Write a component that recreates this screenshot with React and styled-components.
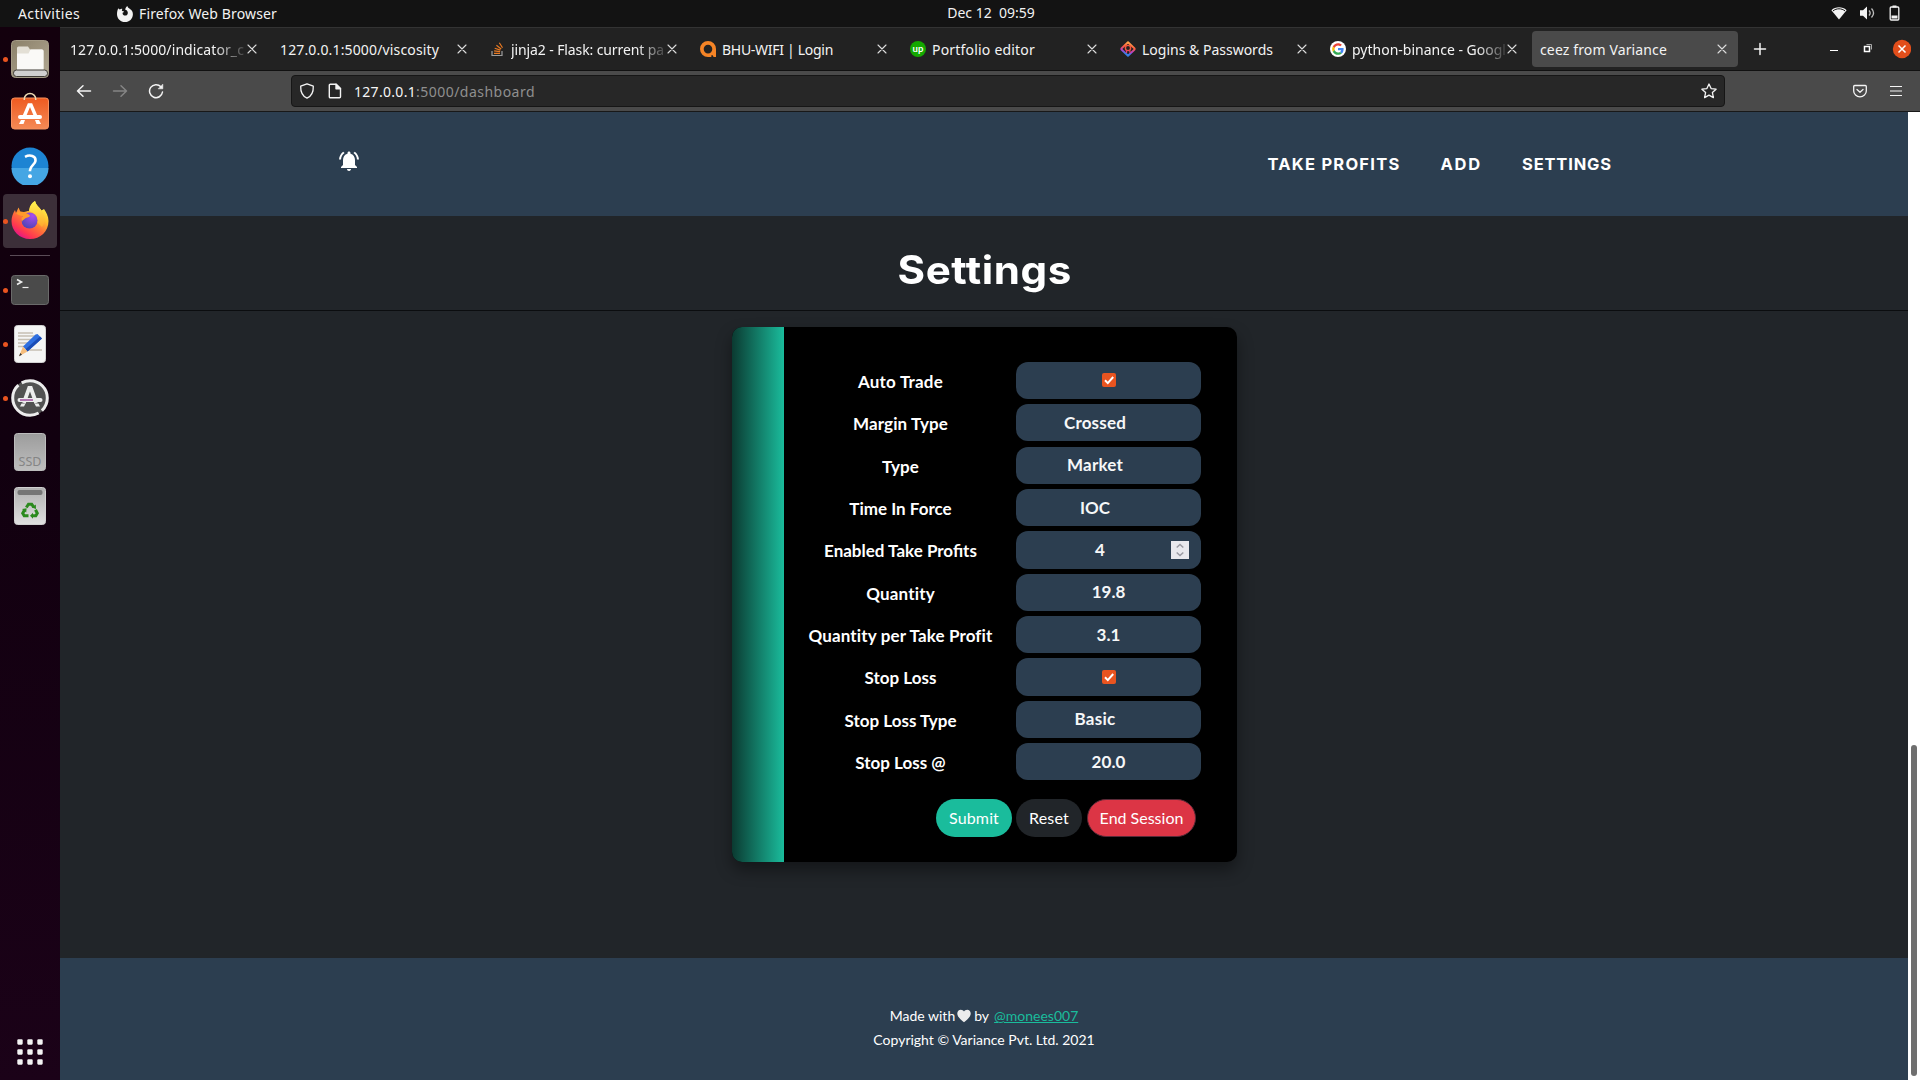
import React, { useLayoutEffect, useRef, useState } from "react";
import styled, { createGlobalStyle, css } from "styled-components";
import { MdNotificationsActive } from "react-icons/md";

const ui = `"Noto Sans", "Open Sans", sans-serif`;
const lato = `Lato, "Liberation Sans", sans-serif`;
const heading = `Inter, "Open Sans", sans-serif`;

const Global = createGlobalStyle`
  * { box-sizing: border-box; }
  html, body { margin: 0; height: 100%; overflow: hidden; background: #212529; }
  svg { display: block; flex: none; }
`;

/* Text tracked so that its line has the given width */
const Line = styled.span`
  display: inline-block;
  white-space: pre;
`;
function Tracked({ width, children }) {
  const ref = useRef(null);
  const [spacing, setSpacing] = useState(0);
  useLayoutEffect(() => {
    const natural = ref.current.getBoundingClientRect().width;
    const step = (width - natural) / Math.max(1, children.length);
    // tiny corrections are dropped so that ligatures stay on
    setSpacing(Math.abs(step) < 0.09 ? 0 : step);
  }, [width, children]);
  return <Line ref={ref} style={{ letterSpacing: spacing }}>{children}</Line>;
}

const Screen = styled.div`
  width: 1920px;
  height: 1080px;
  display: flex;
  flex-direction: column;
  overflow: hidden;
  background: #12000e;
`;

/* ---------- desktop bar ---------- */
const TopBar = styled.header`
  height: 27px;
  flex: none;
  display: grid;
  grid-template-columns: 1fr auto 1fr;
  align-items: center;
  background: #131313;
  color: #f2f2f2;
  font: 400 14px/26px ${ui};
`;
const TopLeft = styled.div`
  display: flex;
  align-items: center;
  padding-left: 18px;
`;
const AppMenu = styled.div`
  display: flex;
  align-items: center;
  gap: 6px;
  margin-left: 37px;
`;
const Clock = styled.div`
  margin-left: 62px;
  padding-bottom: 1px;
`;
const Tray = styled.div`
  display: flex;
  justify-content: flex-end;
  align-items: center;
  gap: 12px;
  padding: 0 19px 2px 0;
`;

const Body = styled.div`
  flex: 1;
  min-height: 0;
  display: flex;
`;

/* ---------- dock ---------- */
const Dock = styled.nav`
  width: 60px;
  flex: none;
  display: flex;
  flex-direction: column;
  align-items: center;
  padding: 5px 0 11px;
  background: linear-gradient(180deg, #13000d 0%, #11000f 40%, #1b0218 100%);
`;
const DockItem = styled.div`
  position: relative;
  width: 54px;
  height: 54px;
  flex: none;
  display: flex;
  align-items: center;
  justify-content: center;
  padding-bottom: ${(p) => p.$lift || 0}px;
  border-radius: 4px;
  background: ${(p) => (p.$active ? "#3c2f39" : "transparent")};
  ${(p) =>
    p.$running &&
    css`
      &::before {
        content: "";
        position: absolute;
        left: 0;
        top: 25px;
        width: 5px;
        height: 5px;
        border-radius: 50%;
        background: #e95420;
      }
    `}
`;
const DockRule = styled.div`
  width: 40px;
  height: 1px;
  margin: 7px 0;
  background: #5a4c57;
`;
const AppsButton = styled.div`
  margin-top: auto;
  width: 54px;
  height: 34px;
  display: flex;
  align-items: center;
  justify-content: center;
`;

/* ---------- browser ---------- */
const Browser = styled.div`
  flex: 1;
  min-width: 0;
  display: flex;
  flex-direction: column;
`;
const TabStrip = styled.div`
  height: 44px;
  flex: none;
  display: flex;
  align-items: center;
  padding: 0 9px 0 2px;
  background: #222222;
  border-top: 1px solid #333333;
  border-bottom: 1px solid #111111;
  font: 400 14px/20px ${ui};
  color: #f3f3f3;
`;
const Tab = styled.div`
  width: 206px;
  height: 36px;
  margin-right: 4px;
  padding: 0 9px 0 8px;
  display: flex;
  align-items: center;
  gap: 6px;
  border-radius: 4px;
  background: ${(p) => (p.$active ? "#4a4a4a" : "transparent")};
`;
const TabTitle = styled.div`
  flex: 1;
  min-width: 0;
  overflow: hidden;
  margin-right: -6px;
  padding-top: 1px;
  white-space: nowrap;
  ${(p) => p.$fade && css`mask-image: linear-gradient(90deg, #000 82%, transparent 103%);`}
`;
const NewTab = styled.div`
  padding-left: 11px;
`;
const WindowControls = styled.div`
  margin-left: auto;
  display: flex;
  align-items: center;
`;
const Toolbar = styled.div`
  height: 41px;
  flex: none;
  display: flex;
  align-items: center;
  padding: 0 18px 0 16px;
  background: #4a4a4a;
  border-bottom: 1px solid #181818;
`;
const NavButtons = styled.div`
  display: flex;
  gap: 20px;
  width: 215px;
`;
const UrlBar = styled.div`
  width: 1434px;
  height: 32px;
  display: flex;
  align-items: center;
  padding: 0 7px 0 7px;
  background: #272727;
  border: 1px solid #161616;
  border-radius: 4px;
  color: #8f8f8f;
  font: 400 14px/30px ${ui};
`;
const UrlText = styled.div`
  flex: 1;
  padding: 2px 0 0 11px;
  b { font-weight: 400; color: #f6f6f6; }
`;
const PageIcon = styled.div`
  margin-left: 12px;
`;
const ToolbarEnd = styled.div`
  margin-left: auto;
  display: flex;
  align-items: center;
  gap: 23px;
`;

/* ---------- page ---------- */
const Viewport = styled.div`
  flex: 1;
  min-height: 0;
  display: flex;
`;
const Page = styled.div`
  width: 1848px;
  display: flex;
  flex-direction: column;
  background: #212529;
  color: #fff;
  font-family: ${lato};
`;
const ScrollTrack = styled.div`
  flex: 1;
  display: flex;
  align-items: flex-end;
  justify-content: center;
  padding-bottom: 4px;
  background: #fff;
`;
const ScrollThumb = styled.div`
  width: 6px;
  height: 331px;
  border-radius: 3px;
  background: #6f6f6f;
`;
const SiteHeader = styled.div`
  height: 104px;
  flex: none;
  display: flex;
  justify-content: space-between;
  align-items: center;
  padding: 0 296px 0 277px;
  background: #2c3e50;
  font: 700 16.5px/24px ${heading};
`;
const Bell = styled.div`
  margin-top: -6px;
`;
const SiteNav = styled.div`
  display: flex;
  gap: 40px;
`;
const TitleBand = styled.div`
  height: 95px;
  flex: none;
  display: flex;
  justify-content: center;
  align-items: center;
  padding-top: 13px;
  border-bottom: 1px solid #0b0d0f;
`;
const Title = styled.h1`
  margin: 0 0 0 2px;
  font: 700 39px/48px ${heading};
  transform: scaleX(1.08);
`;
const CardArea = styled.div`
  flex: 1;
  display: flex;
  justify-content: center;
  align-items: flex-start;
  padding-top: 16px;
`;
const Card = styled.div`
  width: 505px;
  height: 535px;
  display: flex;
  overflow: hidden;
  border-radius: 10px;
  background: #000;
  box-shadow: 0 8px 16px rgba(0, 0, 0, 0.4);
`;
const Accent = styled.div`
  width: 52px;
  background: linear-gradient(90deg, #0b3a31, #1abc9c);
`;
const Form = styled.div`
  width: 417px;
  padding-top: 34.8px;
`;
const Row = styled.div`
  height: 42.38px;
  display: grid;
  grid-template-columns: 232px 185px;
  align-items: start;
  font: 700 17px/37px ${lato};
  text-align: center;
`;
const Label = styled.label`
  padding: 1px 0 0 2px;
`;
const Field = styled.div`
  height: 37.3px;
  display: grid;
  grid-template-columns: 1fr auto;
  align-items: center;
  border-radius: 12px;
  background: #2c3e50;
  padding-left: ${(p) => (p.$kind === "number" ? 14 : 1)}px;
  padding-right: ${(p) => (p.$kind === "select" ? 27 : p.$kind === "number" ? 12 : 0)}px;
  color: #f6f7f8;
`;
const Value = styled.div`
  line-height: 36px;
`;
const Check = styled.div`
  display: flex;
  justify-content: center;
  padding: 0 0 1px 1px;
`;
const Spinner = styled.div`
  width: 18px;
  height: 18px;
  background: #e9e9ed;
`;
const Actions = styled.div`
  display: flex;
  align-items: center;
  justify-content: flex-end;
  padding: 13.4px 5px 0 0;
`;
const Button = styled.button`
  width: ${(p) => p.$w}px;
  height: 38px;
  margin-left: ${(p) => p.$gap || 0}px;
  padding: 0 0 0 1px;
  border: ${(p) => p.$edge ? `1px solid ${p.$edge}` : "0"};
  border-radius: 19px;
  background: ${(p) => p.$bg};
  color: #fff;
  font: 400 16px/36px ${lato};
`;
const Footer = styled.footer`
  height: 122px;
  flex: none;
  padding-top: 46px;
  background: #2c3e50;
  font: 400 14px/24px ${lato};
  text-align: center;
`;
const FooterLine = styled.div`
  display: flex;
  align-items: center;
  justify-content: center;
  svg { margin: 0 3px 0 2px; }
`;
const Author = styled.a`
  margin-left: 5px;
  color: #1abc9c;
  span { text-decoration: underline; }
`;

/* ---------- drawings ---------- */
const Stroke = ({ size = 16, w = 1.4, color = "#f4f4f4", children, box = 16 }) => (
  <svg width={size} height={size} viewBox={`0 0 ${box} ${box}`} fill="none" stroke={color} strokeWidth={w} strokeLinecap="round" strokeLinejoin="round">
    {children}
  </svg>
);
const Cross = () => (
  <Stroke size={14} box={14} w={1.1} color="#dddddd"><path d="M3 3l8 8M11 3l-8 8" /></Stroke>
);
const Arrow = ({ color, flip }) => (
  <Stroke color={color} w={1.5}>
    <path d={flip ? "M1.500 8h13M9 2.800L14.500 8 9 13.200" : "M14.500 8h-13M7 2.800L1.500 8 7 13.200"} />
  </Stroke>
);
const FirefoxMono = () => (
  <svg width="16" height="16" viewBox="0 0 16 16">
    <path fill="#f2f2f2" d="M1.4 2.3C1.7 3 2.2 3.3 2.8 3.5 3.7 2.8 4.6 2.7 5.4 2.9 5 3.4 4.8 4 4.9 4.7c.6.5 1.4.6 2.2.8-.1.6-.9.9-1.5 1.2-.3 1.6 1 2.9 2.5 2.9 1.800 0 2.900-1.500 2.700-3.200C10.600 5 9.500 4 8.200 3.800 8.300 2.200 9 .9 10.400 0c.3 1.300 1.300 2.100 2.600 2.900C14.900 4.200 16 6 15.900 8.400 15.700 12.700 12.400 16 8 16S0 12.600 0 8.200C0 6 .4 3.800 1.400 2.300z" />
  </svg>
);
const Wifi = () => (
  <svg width="16" height="16" viewBox="0 0 16 16">
    <path d="M8 14.500L.4 5.200C4.600 1.400 11.400 1.400 15.600 5.200z" fill="#f2f2f2" />
    <path d="M2 5.900c3.600-2.800 8.400-2.800 12 0" fill="none" stroke="#131313" strokeWidth="1" />
  </svg>
);
const Volume = () => (
  <svg width="17" height="16" viewBox="0 0 17 16">
    <path d="M1 5.200h3L8 1.500v13L4 10.800H1z" fill="#f2f2f2" />
    <path d="M10 5.500c1.400 1.500 1.400 3.500 0 5M12.500 3.500c2.500 2.700 2.500 6.300 0 9" fill="none" stroke="#bdbdbd" strokeWidth="1.300" />
  </svg>
);
const Battery = () => (
  <svg width="13" height="16" viewBox="0 0 12 16">
    <path d="M4 .5h4v2H4z" fill="#f2f2f2" />
    <rect x="1.700" y="2" width="8.600" height="13" rx="1" fill="none" stroke="#f2f2f2" strokeWidth="1.300" />
    <rect x="3" y="10.500" width="6" height="3" fill="#f2f2f2" />
  </svg>
);

const StackIcon = () => (
  <svg width="15" height="16" viewBox="0 0 15 16" fill="none">
    <path d="M2 10v4.500h10V10" stroke="#9d9d9d" strokeWidth="1.200" />
    <path d="M4 12.300h6M4.100 9.900l6 .7M4.700 7.200l5.700 1.900M6.400 4.300l4.800 3.600M9.300 1.800l3.200 5" stroke="#e87922" strokeWidth="1.200" />
  </svg>
);
const OrangeQ = () => (
  <svg width="16" height="16" viewBox="0 0 16 16">
    <path d="M8 0a8 8 0 100 16h8V8a8 8 0 00-8-8zm0 3.800a4.300 4.300 0 110 8.600 4.300 4.300 0 010-8.600z" fill="#f58426" fillRule="evenodd" />
    <path d="M11 14.700l1.400-.8 1.200 2.100h-2z" fill="#222" />
  </svg>
);
const Upwork = () => (
  <svg width="16" height="16" viewBox="0 0 16 16">
    <circle cx="8" cy="8" r="8" fill="#14a800" />
    <text x="8" y="10.600" textAnchor="middle" fontFamily="Lato, sans-serif" fontWeight="700" fontSize="9.500" fill="#fff">up</text>
  </svg>
);
const Lockwise = () => (
  <svg width="16" height="16" viewBox="0 0 16 16" fill="none">
    <defs>
      <linearGradient id="lw" gradientUnits="userSpaceOnUse" x1="10" y1="0" x2="6" y2="16">
        <stop offset="0" stopColor="#ffbd4f" /><stop offset=".4" stopColor="#ff5a3c" />
        <stop offset=".65" stopColor="#b040d0" /><stop offset=".8" stopColor="#3a7ee6" />
      </linearGradient>
    </defs>
    <path d="M8 1.200L14.300 7.200a1.200 1.200 0 010 1.600L8 14.800 1.700 8.800a1.200 1.200 0 010-1.600z" stroke="url(#lw)" strokeWidth="1.900" strokeLinejoin="round" />
    <circle cx="8" cy="7" r="2.600" stroke="#f3553f" strokeWidth="1.400" />
    <path d="M6.500 9v3M9.500 9l.8 3" stroke="#e8386f" strokeWidth="1.300" />
  </svg>
);
const Google = () => (
  <svg width="16" height="16" viewBox="0 0 48 48">
    <circle cx="24" cy="24" r="24" fill="#fff" />
    <g transform="translate(6.500 6.500) scale(.73)">
      <path fill="#EA4335" d="M24 9.500c3.540 0 6.710 1.220 9.210 3.600l6.850-6.850C35.900 2.380 30.470 0 24 0 14.620 0 6.510 5.380 2.560 13.220l7.980 6.190C12.430 13.720 17.740 9.500 24 9.500z" />
      <path fill="#4285F4" d="M46.980 24.550c0-1.570-.15-3.090-.38-4.550H24v9.020h12.940c-.58 2.960-2.260 5.480-4.780 7.180l7.730 6c4.510-4.180 7.090-10.360 7.090-17.650z" />
      <path fill="#FBBC05" d="M10.530 28.590c-.48-1.450-.76-2.990-.76-4.590s.27-3.140.76-4.590l-7.980-6.190C.92 16.460 0 20.120 0 24c0 3.880.92 7.540 2.560 10.780l7.970-6.190z" />
      <path fill="#34A853" d="M24 48c6.480 0 11.930-2.130 15.890-5.810l-7.730-6c-2.150 1.450-4.920 2.300-8.160 2.300-6.260 0-11.570-4.220-13.470-9.910l-7.980 6.190C6.510 42.620 14.620 48 24 48z" />
    </g>
  </svg>
);

const FilesIcon = () => (
  <svg width="38" height="38" viewBox="0 0 38 38">
    <defs><linearGradient id="fi" x1="0" y1="0" x2="1" y2="1"><stop offset="0" stopColor="#8a8069" /><stop offset="1" stopColor="#b3a993" /></linearGradient></defs>
    <rect x=".5" y=".5" width="37" height="37" rx="4" fill="url(#fi)" stroke="#a49b86" />
    <path d="M6 8a1.500 1.500 0 011.500-1.500H17l2 3H31A1.500 1.500 0 0132.500 11v19H6z" fill="#e3dfd5" />
    <path d="M6 13.500h11.500l2-4H31a1.500 1.500 0 011.500 1.500v19H6z" fill="#faf9f7" />
    <rect x="2.500" y="30" width="34" height="6.500" rx="3" fill="#d0cfcf" stroke="#3f3b35" />
  </svg>
);
const SoftwareIcon = () => (
  <svg width="38" height="38" viewBox="0 0 38 38">
    <defs><linearGradient id="so" x1="0" y1="0" x2="0" y2="1"><stop offset="0" stopColor="#ee5a20" /><stop offset="1" stopColor="#f58a56" /></linearGradient></defs>
    <rect x=".5" y="6" width="37" height="31" rx="3" fill="url(#so)" stroke="#f7915f" />
    <path d="M13.300 8V6.800a5.700 5.200 0 0111.400 0V8" fill="none" stroke="#ecd9b2" strokeWidth="1.500" />
    <path d="M12.500 26L18 13h2L25.500 26" fill="none" stroke="#fff" strokeWidth="3.400" />
    <path d="M9 25h20" stroke="#fff" strokeWidth="4" strokeLinecap="round" />
    <path d="M8 32l2-4h4l-1.500 4zM30 32l-2-4h-4l1.500 4z" fill="#fff" />
  </svg>
);
const HelpIcon = () => (
  <svg width="38" height="38" viewBox="0 0 38 38">
    <circle cx="19" cy="19" r="18.500" fill="#1d84d3" />
    <path d="M.5 21h37a18.500 18.500 0 01-37 0z" fill="#45a6e4" />
    <path d="M14 9.800c5-2.500 11-1 10.500 4-.4 4-5.500 5-5.500 9.500v1" fill="none" stroke="#fff" strokeWidth="2.600" />
    <circle cx="19" cy="29.300" r="2" fill="#fff" />
  </svg>
);
const FirefoxIcon = () => (
  <svg width="38" height="40" viewBox="0 0 38 40">
    <defs>
      <linearGradient id="ff" x1=".85" y1=".1" x2=".25" y2="1">
        <stop offset="0" stopColor="#fff44f" /><stop offset=".3" stopColor="#ffc02e" /><stop offset=".55" stopColor="#ff7139" />
        <stop offset=".8" stopColor="#ff3750" /><stop offset="1" stopColor="#e01090" />
      </linearGradient>
      <radialGradient id="fg" cx=".7" cy=".2" r=".9"><stop offset="0" stopColor="#a94cf0" /><stop offset="1" stopColor="#4a45b0" /></radialGradient>
      <linearGradient id="fy" x1="0" y1="0" x2="0" y2="1"><stop offset="0" stopColor="#fff44f" /><stop offset="1" stopColor="#ffa92e" /></linearGradient>
    </defs>
    <path d="M24 1c1 4 4 6 6.500 9.500L33 9c2 3 4.500 7 4.500 12C37.500 31.500 29.500 39 19 39S.5 31 .5 21c0-4 1.500-8 3.500-11l1 3 2.500-5.500 2 4.500 3.500 0c3-1 5.500-.5 5.500-2 .5-4 2.500-7 5.500-9z" fill="url(#ff)" />
    <path d="M24 1c1 4 4 6 6.500 9.500C34 15 35 22 31 27l-5-5c2-5-2-9-8-11 .5-5 3-8.500 6-10z" fill="url(#fy)" />
    <circle cx="18.500" cy="20.500" r="8" fill="url(#fg)" />
    <path d="M5 13c4-3 8-1 10 0 2 1 4 2 4 3-1 1.500-4 1.500-5.500 3-1 1-2.500 1.500-2.500 3-1-2-1-4 1-6-2-.5-5-.5-7-3z" fill="#ff9a2b" />
  </svg>
);
const TerminalIcon = () => (
  <svg width="38" height="30" viewBox="0 0 38 30">
    <rect x=".5" y=".5" width="37" height="29" rx="3" fill="#4a4a4a" stroke="#6a6a6a" />
    <path d="M6 4.500l4.500 2.500L6 9.500" fill="none" stroke="#eee" strokeWidth="1.600" />
    <path d="M11.500 12.500h6" stroke="#eee" strokeWidth="1.200" />
  </svg>
);
const EditorIcon = () => (
  <svg width="38" height="38" viewBox="0 0 38 38">
    <rect x="3.500" y=".5" width="31" height="37" rx="3" fill="#f5f5f5" stroke="#d2d2d2" />
    <path d="M7 8h15M7 11h19M7 14.500h15M7 18h12M7 21.500h10M17 25h14" stroke="#c6bfb2" strokeWidth="1.300" />
    <path d="M24.500 9.500L12 21.500l4.500 5L31 13.500 26.500 9z" fill="#2f6fe0" />
    <path d="M31 13.500l-14.500 13-2-2.200L29 11.500z" fill="#1a4bb5" />
    <path d="M12 21.500l4.500 5-8.500 4.700z" fill="#f6bd7c" />
    <path d="M8 31.200l1.300-3.200 1.700 1.700z" fill="#333" />
  </svg>
);
const UpdaterIcon = () => (
  <svg width="38" height="38" viewBox="0 0 38 38">
    <circle cx="19" cy="19" r="18" fill="#525252" />
    <circle cx="19" cy="19" r="17.300" fill="none" stroke="#ededed" strokeWidth="3" strokeDasharray="50.350 4" strokeDashoffset="-18" />
    <path d="M12.800 24L18.200 9h1.600L25.200 24" fill="none" stroke="#ededed" strokeWidth="3.800" />
    <path d="M8.500 21h21" stroke="#ededed" strokeWidth="4" strokeLinecap="round" />
    <path d="M9 21h13" stroke="#b073b0" strokeWidth="2" />
    <path d="M9 27.500l1.500-3h4l-1.500 3zM29 27.500l-1.500-3h-4l1.500 3z" fill="#ededed" />
  </svg>
);
const DriveIcon = () => (
  <svg width="38" height="38" viewBox="0 0 38 38">
    <defs><linearGradient id="dr" x1="0" y1="0" x2="0" y2="1"><stop offset="0" stopColor="#9c9c9c" /><stop offset="1" stopColor="#bebebe" /></linearGradient></defs>
    <rect x="3.500" y=".5" width="31" height="37" rx="3" fill="url(#dr)" stroke="#bcbcbc" />
    <text x="19" y="33" textAnchor="middle" fontFamily="Noto Sans, sans-serif" fontSize="12.500" fill="#858585">SSD</text>
  </svg>
);
const TrashIcon = () => (
  <svg width="38" height="38" viewBox="0 0 38 38">
    <defs><linearGradient id="tr" x1="0" y1="0" x2="0" y2="1"><stop offset="0" stopColor="#b0b0b0" /><stop offset="1" stopColor="#e0e0e0" /></linearGradient></defs>
    <rect x="3.500" y=".5" width="31" height="37" rx="3" fill="url(#tr)" stroke="#d0d0d0" />
    <rect x="6.500" y="3" width="25" height="5" rx="2" fill="#757575" />
    <g fill="none" stroke="#2b8a1e" strokeWidth="3">
      <path d="M15.300 20.500l2.200-3.300h3.200l2 3" />
      <path d="M24.500 22.800l1.800 3.400-1.500 2.600H21" />
      <path d="M17.500 28.800h-4.300l-1.500-2.600 1.800-3.200" />
    </g>
    <path d="M24.800 17.500l.2 4.600-4.200-1.600zM22 25.800v6l-3-3zM11 22l4.600-.8-.4 4.300z" fill="#2b8a1e" />
  </svg>
);
const AppsIcon = () => (
  <svg width="26" height="26" viewBox="0 0 26 26" fill="#f3f3f3">
    {[0, 10, 20].map((y) => [0, 10, 20].map((x) => <rect key={`${x}-${y}`} x={x + 0.3} y={y + 0.3} width="5.400" height="5.400" rx="1.100" />))}
  </svg>
);
const CheckIcon = () => (
  <svg width="14" height="14" viewBox="0 0 14 14">
    <rect width="14" height="14" rx="2" fill="#e95420" />
    <path d="M3 7.300l2.800 2.800L11.200 4" fill="none" stroke="#fff" strokeWidth="2" />
  </svg>
);
const SpinnerIcon = () => (
  <svg width="18" height="18" viewBox="0 0 18 18" fill="none" stroke="#9a9aa2" strokeWidth="1.500">
    <path d="M5.700 6.500L9 3.500l3.300 3M5.700 11.500l3.300 3 3.300-3" />
  </svg>
);
const Heart = () => (
  <svg width="14" height="14" viewBox="0 0 14 14">
    <path d="M7 13.300C4.500 11.300.3 8.200.3 4.500.3 2.300 1.900.8 3.800.8 5.200.8 6.400 1.500 7 2.600 7.600 1.500 8.800.8 10.200.8c1.900 0 3.500 1.500 3.500 3.700 0 3.700-4.200 6.800-6.700 8.800z" fill="#ececec" />
  </svg>
);

const tabs = [
  { title: "127.0.0.1:5000/indicator_c", width: 174, fade: true },
  { title: "127.0.0.1:5000/viscosity", width: 159 },
  { title: "jinja2 - Flask: current pa", width: 153, fade: true, icon: <StackIcon /> },
  { title: "BHU-WIFI | Login", width: 111, icon: <OrangeQ /> },
  { title: "Portfolio editor", width: 103, icon: <Upwork /> },
  { title: "Logins & Passwords", width: 130, icon: <Lockwise /> },
  { title: "python-binance - Googl", width: 152, fade: true, icon: <Google /> },
  { title: "ceez from Variance", width: 127, active: true },
];

const rows = [
  { label: "Auto Trade", width: 85, kind: "check" },
  { label: "Margin Type", width: 95, kind: "select", value: "Crossed", vw: 62 },
  { label: "Type", width: 37, kind: "select", value: "Market", vw: 56 },
  { label: "Time In Force", width: 102.5, kind: "select", value: "IOC", vw: 30 },
  { label: "Enabled Take Profits", width: 154.5, kind: "number", value: "4", vw: 10 },
  { label: "Quantity", width: 69, kind: "text", value: "19.8", vw: 33.5 },
  { label: "Quantity per Take Profit", width: 184, kind: "text", value: "3.1", vw: 24 },
  { label: "Stop Loss", width: 72, kind: "check" },
  { label: "Stop Loss Type", width: 111.5, kind: "select", value: "Basic", vw: 41 },
  { label: "Stop Loss @", width: 89.5, kind: "text", value: "20.0", vw: 34 },
];

export default function App() {
  return (
    <Screen>
      <Global />
      <TopBar>
        <TopLeft>
          <Tracked width={62}>Activities</Tracked>
          <AppMenu><FirefoxMono /><Tracked width={138}>Firefox Web Browser</Tracked></AppMenu>
        </TopLeft>
        <Clock><Tracked width={87}>{"Dec 12  09:59"}</Tracked></Clock>
        <Tray><Wifi /><Volume /><Battery /></Tray>
      </TopBar>
      <Body>
        <Dock>
          <DockItem $running><FilesIcon /></DockItem>
          <DockItem $lift={4}><SoftwareIcon /></DockItem>
          <DockItem $lift={2}><HelpIcon /></DockItem>
          <DockItem $running $active $lift={2}><FirefoxIcon /></DockItem>
          <DockRule />
          <DockItem $running><TerminalIcon /></DockItem>
          <DockItem $running><EditorIcon /></DockItem>
          <DockItem $running><UpdaterIcon /></DockItem>
          <DockItem><DriveIcon /></DockItem>
          <DockItem><TrashIcon /></DockItem>
          <AppsButton><AppsIcon /></AppsButton>
        </Dock>
        <Browser>
          <TabStrip>
            {tabs.map((t) => (
              <Tab key={t.title} $active={t.active}>
                {t.icon}
                <TabTitle $fade={t.fade}><Tracked width={t.width}>{t.title}</Tracked></TabTitle>
                <Cross />
              </Tab>
            ))}
            <NewTab><Stroke size={14} box={14} w={1.5}><path d="M7 1.500v11M1.500 7h11" /></Stroke></NewTab>
            <WindowControls>
              <svg width="90" height="20" viewBox="0 0 90 20">
                <path d="M9 11.500h8" stroke="#fff" />
                <rect x="43.500" y="7.500" width="5" height="5" fill="none" stroke="#fff" strokeWidth="1.500" />
                <path d="M45.500 5.500h5v5" fill="none" stroke="#aaa" />
                <circle cx="81" cy="10" r="9.200" fill="#e24e1b" />
                <path d="M77.500 6.500l7 7M84.500 6.500l-7 7" stroke="#fff" strokeWidth="1.500" />
              </svg>
            </WindowControls>
          </TabStrip>
          <Toolbar>
            <NavButtons>
              <Arrow />
              <Arrow color="#858585" flip />
              <Stroke w={1.5}><path d="M14.500 9A6.500 6.500 0 1 1 12.900 3.800" /><path d="M14.800 1.500v4.300h-4.300z" fill="#f4f4f4" strokeWidth=".6" /></Stroke>
            </NavButtons>
            <UrlBar>
              <Stroke w={1.300}><path d="M8 .8l6.300 2.400c.2 5-1 9.500-6.300 12C2.700 12.700 1.500 8.200 1.700 3.200z" /></Stroke>
              <PageIcon><Stroke w={1.400}><path d="M3.300 1.200h5.900l4.300 4.300v8.200a1 1 0 01-1 1H3.300a1 1 0 01-1-1V2.200a1 1 0 011-1z" /><path d="M9 1.200v4.500h4.500z" fill="#f4f4f4" /></Stroke></PageIcon>
              <UrlText><b><Tracked width={62}>127.0.0.1</Tracked></b><Tracked width={119}>:5000/dashboard</Tracked></UrlText>
              <Stroke w={1.300}><path d="M8 1l2.100 4.600 5 .6-3.700 3.400 1 5L8 12.100l-4.400 2.500 1-5L.9 6.200l5-.6z" /></Stroke>
            </UrlBar>
            <ToolbarEnd>
              <Stroke w={1.300} size={14} box={14}><path d="M1.700 1.500h10.600a1 1 0 011 1V7A6.300 5.800 0 01.7 7V2.500a1 1 0 011-1z" /><path d="M4 5.500l3 2.700 3-2.700" /></Stroke>
              <svg width="12" height="14" viewBox="0 0 12 14" stroke="#f4f4f4" strokeWidth="1.200"><path d="M0 2.500h12M0 7h12M0 11.500h12" /></svg>
            </ToolbarEnd>
          </Toolbar>
          <Viewport>
            <Page>
              <SiteHeader>
                <Bell><MdNotificationsActive size={24} /></Bell>
                <SiteNav>
                  <Tracked width={133}>TAKE PROFITS</Tracked>
                  <Tracked width={41.500}>ADD</Tracked>
                  <Tracked width={90}>SETTINGS</Tracked>
                </SiteNav>
              </SiteHeader>
              <TitleBand><Title><Tracked width={174}>Settings</Tracked></Title></TitleBand>
              <CardArea>
                <Card>
                  <Accent />
                  <Form>
                    {rows.map((r) => (
                      <Row key={r.label}>
                        <Label><Tracked width={r.width}>{r.label}</Tracked></Label>
                        <Field $kind={r.kind}>
                          {r.kind === "check" ? <Check><CheckIcon /></Check> : <Value><Tracked width={r.vw}>{r.value}</Tracked></Value>}
                          {r.kind === "number" && <Spinner><SpinnerIcon /></Spinner>}
                        </Field>
                      </Row>
                    ))}
                    <Actions>
                      <Button $w={76} $bg="#1abc9c"><Tracked width={50}>Submit</Tracked></Button>
                      <Button $w={66} $gap={4} $bg="#212529"><Tracked width={40}>Reset</Tracked></Button>
                      <Button $w={109} $gap={5} $bg="#dc3545" $edge="#5a2a38"><Tracked width={83}>End Session</Tracked></Button>
                    </Actions>
                  </Form>
                </Card>
              </CardArea>
              <Footer>
                <FooterLine><Tracked width={65}>Made with</Tracked><Heart /><Tracked width={15}>by</Tracked><Author><Tracked width={84}>@monees007</Tracked></Author></FooterLine>
                <FooterLine><Tracked width={219.5}>Copyright © Variance Pvt. Ltd. 2021</Tracked></FooterLine>
              </Footer>
            </Page>
            <ScrollTrack><ScrollThumb /></ScrollTrack>
          </Viewport>
        </Browser>
      </Body>
    </Screen>
  );
}
